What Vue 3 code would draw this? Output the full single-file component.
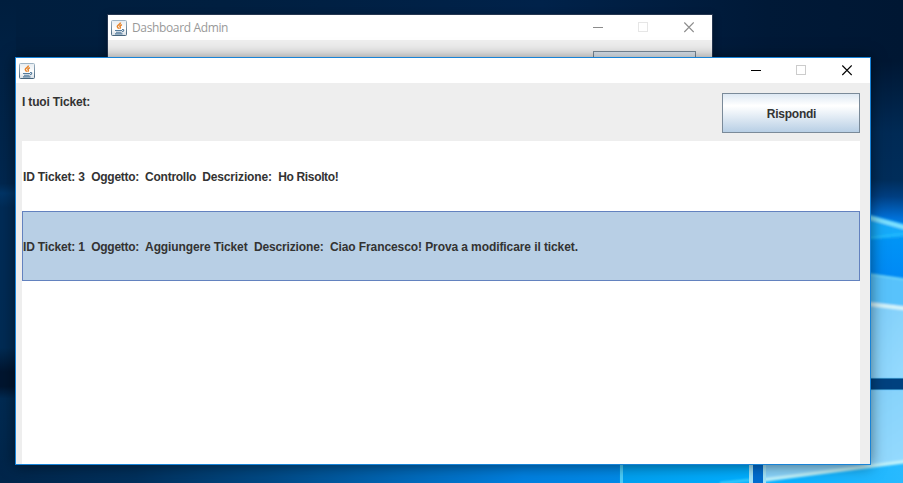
<script setup>
const tickets = [
  { id: 3, subject: 'Controllo', text: 'Ho Risolto!', cls: 'first', selected: false },
  { id: 1, subject: 'Aggiungere Ticket', text: 'Ciao Francesco! Prova a modificare il ticket.', cls: 'second', selected: true },
]
const windows = ['back', 'front']
</script>

<template>
  <div class="desktop">
    <svg class="wallpaper" width="903" height="483" viewBox="0 0 903 483">
      <defs>
        <linearGradient id="night" x1="0" y1="0" x2="1" y2="0">
          <stop offset="0" stop-color="#001e3e" />
          <stop offset=".25" stop-color="#001f40" />
          <stop offset=".6" stop-color="#00224a" />
          <stop offset=".85" stop-color="#001937" />
          <stop offset="1" stop-color="#001733" />
        </linearGradient>
        <linearGradient id="left" x1="0" y1="0" x2="0" y2="1">
          <stop offset="0" stop-color="#001e3e" />
          <stop offset=".38" stop-color="#00274f" />
          <stop offset=".4" stop-color="#003466" />
          <stop offset=".43" stop-color="#002b56" />
          <stop offset=".72" stop-color="#002b54" />
          <stop offset=".77" stop-color="#00152f" />
          <stop offset=".8" stop-color="#00152f" />
          <stop offset=".825" stop-color="#002a52" />
          <stop offset="1" stop-color="#002549" />
        </linearGradient>
        <linearGradient id="right" x1="870" y1="60" x2="850" y2="483" gradientUnits="userSpaceOnUse">
          <stop offset="0" stop-color="#001733" />
          <stop offset=".17" stop-color="#002a55" />
          <stop offset=".28" stop-color="#002d5a" />
          <stop offset=".32" stop-color="#003f82" />
          <stop offset=".37" stop-color="#0070d8" />
          <stop offset=".42" stop-color="#0094f6" />
          <stop offset=".52" stop-color="#0088f5" />
        </linearGradient>
        <linearGradient id="floor" x1="0" y1="0" x2="903" y2="0" gradientUnits="userSpaceOnUse">
          <stop offset="0" stop-color="#00254a" />
          <stop offset=".15" stop-color="#00305c" />
          <stop offset=".3" stop-color="#004a86" />
          <stop offset=".45" stop-color="#0068b8" />
          <stop offset=".58" stop-color="#0080e0" />
          <stop offset=".685" stop-color="#008ae8" />
          <stop offset=".69" stop-color="#00a0f0" />
          <stop offset=".82" stop-color="#00aeff" />
          <stop offset="1" stop-color="#28baff" />
        </linearGradient>
        <linearGradient id="pane" x1="0" y1="0" x2="1" y2="1">
          <stop offset="0" stop-color="#7acbf8" />
          <stop offset="1" stop-color="#98dcff" />
        </linearGradient>
        <filter id="soft" x="-20%" y="-20%" width="140%" height="140%"><feGaussianBlur stdDeviation=".8" /></filter>
      </defs>
      <rect width="903" height="483" fill="url(#night)" />
      <rect y="0" width="16" height="483" fill="url(#left)" />
      <rect x="860" y="60" width="43" height="423" fill="url(#right)" />
      <rect y="460" width="903" height="23" fill="url(#floor)" />
      <g filter="url(#soft)">
        <path d="M860 212L910 225V237L860 240Z" fill="#18aafa" />
        <path d="M860 215L910 229" stroke="#7ee2ff" stroke-width="4" />
        <path d="M860 239L910 233" stroke="#20bcff" stroke-width="2" />
        <path d="M860 272L910 280V309L860 303Z" fill="#58c2fb" />
        <path d="M860 273L910 280" stroke="#6ed4fa" stroke-width="2" />
        <path d="M860 303L910 309V379H860Z" fill="url(#pane)" />
        <path d="M860 303L910 309" stroke="#d5f4fa" stroke-width="4" />
        <path d="M764 389H910V462L764 480Z" fill="url(#pane)" />
        <path d="M764 480L910 461" stroke="#c0f2fa" stroke-width="3.5" />
        <path d="M720 483L750 480" stroke="#45d5ff" stroke-width="2" />
      </g>
      <rect x="860" y="378.500" width="43" height="10.500" fill="#00417f" />
      <path d="M860 378.500H903M860 389.500H903" stroke="#2d82b8" />
      <rect x="620" y="464" width="3" height="19" fill="#4bcdf8" />
      <rect x="749" y="464" width="17" height="19" fill="#a3e3f8" />
      <rect x="753" y="464" width="10" height="19" fill="#006dd0" />
    </svg>

    <section v-for="w in windows" :key="w" class="window" :class="w">
      <header class="titlebar">
        <svg class="java" width="16" height="16" viewBox="0 0 16 16">
          <defs>
            <linearGradient :id="'tile-' + w" x1="0" y1="0" x2="0" y2="1">
              <stop offset="0" stop-color="#e6ecf1" />
              <stop offset=".55" stop-color="#fff" />
              <stop offset="1" stop-color="#d5dde4" />
            </linearGradient>
            <linearGradient :id="'edge-' + w" x1="0" y1="0" x2="0" y2="1">
              <stop offset="0" stop-color="#9fb4c4" />
              <stop offset="1" stop-color="#47657d" />
            </linearGradient>
          </defs>
          <rect x=".5" y=".5" width="15" height="15" rx="1" :fill="'url(#tile-' + w + ')'" :stroke="'url(#edge-' + w + ')'" />
          <path d="M9.500 2.500C9.700 4.300 6.300 4.700 6.300 6.500C6.300 7.500 7.400 7.800 7.700 8.800M10.900 4.800C8.700 5.500 8.500 6.200 9.300 7C9.700 7.600 9.200 8.300 8.700 8.800" fill="none" stroke="#e8862e" stroke-width="1.500" />
          <path d="M4 10.500H11M5 12.200H10.500M4 13.900H11.500M11 9.500H12C13.200 9.500 13 11.500 11 11.700" fill="none" stroke="#557c9c" stroke-width="1.100" />
        </svg>
        <span v-if="w === 'back'" class="caption">Dashboard Admin</span>
        <svg class="controls" width="101" height="11" viewBox="0 0 101 11" fill="none">
          <path d="M0 5.500H10" class="ink" />
          <rect x="45.500" y=".5" width="9" height="9" class="disabled" />
          <path d="M91.300 .5L100.700 10M100.700 .5L91.300 10" class="ink cross" />
        </svg>
      </header>

      <div v-if="w === 'back'" class="backbody"><div class="button backbutton"></div></div>
      <main v-else class="body">
        <div class="toolbar">
          <h1>I tuoi Ticket:</h1>
          <button class="button reply">Rispondi</button>
        </div>
        <ul class="list">
          <li v-for="t in tickets" :key="t.id" :class="[t.cls, { selected: t.selected }]">
            <span class="number">ID Ticket: {{ t.id }}&nbsp; </span>
            <span class="label">Oggetto:&nbsp; </span>
            <span class="subject">{{ t.subject }}&nbsp; </span>
            <span class="detail">Descrizione:&nbsp; </span>
            <span class="text">{{ t.text }}</span>
          </li>
        </ul>
      </main>
    </section>
  </div>
</template>

<style>
body { margin: 0; overflow: hidden; }
</style>

<style scoped>
.desktop { position: relative; width: 903px; height: 483px; overflow: hidden; font: bold 12px "Liberation Sans", Arial, sans-serif; color: #333; }
.wallpaper { display: block; }
.window { position: absolute; box-sizing: border-box; display: flex; flex-direction: column; background: #eee; }
.back { left: 107px; top: 14px; width: 606px; height: 300px; border: 1px solid #253650; box-shadow: 0 2px 8px rgba(0, 0, 0, .3); }
.front { left: 15px; top: 57px; width: 856px; height: 408px; border: 1px solid #1883d7; box-shadow: 0 1px 14px rgba(0, 0, 0, .5); }
.titlebar { height: 25px; flex: none; box-sizing: border-box; display: flex; align-items: center; background: #fff; padding: 0 18px 0 3px; }
.caption { margin-left: 5px; font: 12px/16px "Open Sans", sans-serif; letter-spacing: -.36px; color: #999; }
.controls { margin-left: auto; }
.ink { stroke: #000; }
.back .ink { stroke: #8c8c8c; }
.disabled { stroke: #ccc; }
.back .disabled { stroke: #e6e6e6; }
.cross { stroke-width: 1.1; }
.backbody { display: flex; justify-content: flex-end; padding: 11px 16px 0 0; }
.button { box-sizing: border-box; border: 1px solid #7a8a99; background: linear-gradient(#dde8f3 0, #fff 30%, #fff 32%, #b8cfe5 100%); }
.backbutton { width: 103px; height: 40px; }
.body { flex: 1; min-height: 0; display: flex; flex-direction: column; padding: 10px 10px 0 6px; }
.toolbar { display: flex; justify-content: space-between; align-items: flex-start; height: 48px; flex: none; }
h1 { margin: 1px 0 0; font-size: 12px; line-height: 16px; letter-spacing: -.17px; }
.reply { width: 138px; height: 40px; padding: 2px 0 0 1px; font: inherit; letter-spacing: -.25px; color: #333; }
.list { flex: 1; margin: 0; padding: 0; list-style: none; background: #fff; }
li { box-sizing: border-box; height: 70px; display: flex; align-items: center; border: 1px solid transparent; padding-top: 2px; line-height: 16px; white-space: pre; }
.selected { background: #b8cfe5; border-color: #6382bf; }
.number { letter-spacing: -.16px; }
.label { letter-spacing: -.28px; }
.detail { letter-spacing: -.15px; }
.first .subject { letter-spacing: -.26px; }
.first .text { letter-spacing: -.34px; }
.second .subject { letter-spacing: -.12px; }
.second .text { letter-spacing: -.09px; }
</style>
